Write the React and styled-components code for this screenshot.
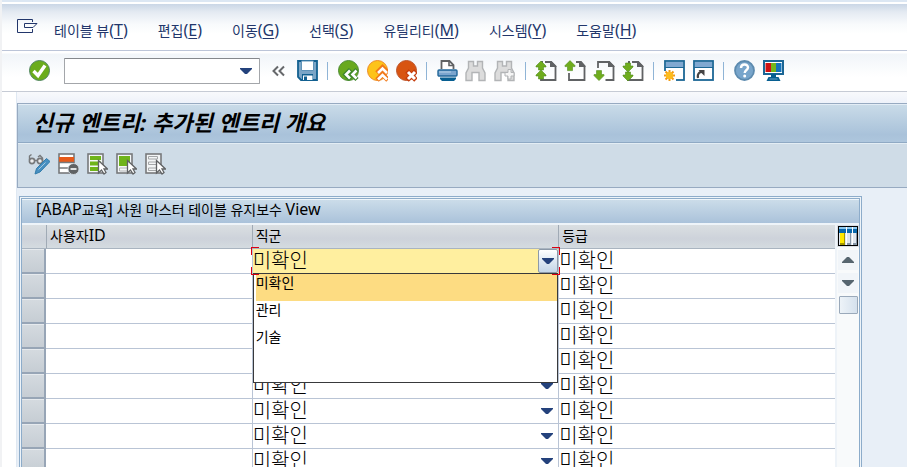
import React from "react";
import styled, { createGlobalStyle, css } from "styled-components";

const GlobalStyle = createGlobalStyle`
  *, *::before, *::after { box-sizing: border-box; }
  body {
    margin: 0;
    overflow: hidden;
    background: #fff;
    color: #000;
    font-family: "Noto Sans", "Noto Sans CJK KR", sans-serif;
    font-size: 14px;
  }
  button, input, select { font: inherit; color: inherit; }
`;

const Page = styled.div`
  display: flex;
  flex-direction: column;
  height: 100vh;
  overflow: hidden;
  border-left: 2px solid #f1f2f4;
`;

const MenuBar = styled.nav`
  flex: none;
  display: flex;
  align-items: center;
  height: 51px;
  padding: 10px 15px 0;
  gap: 15px;
  border-top: 2px solid #dce7f3;
  border-bottom: 1px solid #bcc5d8;
  background: linear-gradient(#fff 0 2px, #cad6e6 2px, #e4eaf2 10px, #f8fafc 22px, #fff 32px);
`;

const MenuList = styled.ul`
  display: flex;
  gap: 30px;
  margin: 0;
  padding: 0;
  list-style: none;
`;

const MenuButton = styled.button`
  padding: 0;
  border: 0;
  background: none;
  color: #22366b;
  line-height: 22px;
  white-space: nowrap;
`;

const Latin = styled.span`
  font-size: 16px;
  line-height: 16px;
  u { text-underline-offset: 2px; }
`;

const PlainButton = styled.button`
  flex: none;
  display: flex;
  align-items: center;
  justify-content: center;
  width: 22px;
  height: 22px;
  padding: 0;
  border: 0;
  background: none;
`;

const SystemButton = styled(PlainButton)`
  margin-bottom: 8px;
`;

const ToolBar = styled.div`
  flex: none;
  display: flex;
  align-items: center;
  gap: 7px;
  height: 41px;
  padding-left: 26px;
  border-bottom: 1px solid #c6cbd5;
  background: linear-gradient(#fff 0 2px, #f1f5f9 3px, #fff 26px);
`;

const Separator = styled.span`
  flex: none;
  width: 1px;
  height: 18px;
  margin: 0 2px;
  background: #8fb4d6;
`;

const CommandBox = styled.div`
  flex: none;
  display: flex;
  align-items: center;
  width: 196px;
  height: 26px;
  margin-left: 7px;
  padding-right: 2px;
  border: 1px solid #a3a6aa;
  border-top-color: #85888c;
  border-radius: 1px;
  background: #fff;
  input {
    flex: 1;
    min-width: 0;
    height: 22px;
    padding: 0 4px;
    border: 0;
    outline: 0;
    background: none;
  }
`;

const Main = styled.main`
  flex: 1;
  min-height: 0;
  display: flex;
  flex-direction: column;
  margin-left: 14px;
  padding-top: 11px;
  border-left: 1px solid #dfe8f2;
  background: linear-gradient(#f8f9fc, #eef2fa 11px, #e8eff7 12px);
`;

const ScreenHead = styled.header`
  flex: none;
  border: 1px solid #97aac1;
  border-right: 0;
  background: #cfdce7;
`;

const ScreenTitle = styled.h1`
  height: 39px;
  margin: 0;
  padding-left: 15px;
  border-top: 1px solid #e3edf6;
  border-bottom: 1px solid #8fa9c4;
  background: linear-gradient(#c9dbe8, #a9c2da 80%, #aec6dd);
  font-size: 22px;
  font-style: italic;
  font-weight: 700;
  line-height: 34px;
  white-space: nowrap;
`;

const AppBar = styled.div`
  display: flex;
  align-items: center;
  gap: 7px;
  height: 44px;
  padding: 0 10px 3px;
  border-top: 1px solid #e3edf4;
`;

const GridFrame = styled.section`
  flex: none;
  margin: 8px 45px 0 2px;
  padding: 1px;
  border: 1px solid #8dacca;
  border-bottom: 0;
  background: #eef4f9;
`;

const GridInner = styled.div`
  border: 1px solid #8dacca;
  border-bottom: 0;
`;

const GridTitle = styled.h2`
  height: 26px;
  margin: 0;
  padding-left: 14px;
  border-top: 1px solid #eef5fa;
  border-bottom: 2px solid #eef4f9;
  background: linear-gradient(#cbdce9, #aac2da);
  font-size: 14px;
  font-weight: 400;
  line-height: 20px;
  white-space: nowrap;
`;

const GridBody = styled.div`
  display: grid;
  grid-template-columns: 1fr 24px;
`;

const Table = styled.table`
  width: 100%;
  border-collapse: separate;
  border-spacing: 0;
  table-layout: fixed;
`;

const HeadCell = styled.th`
  height: 24px;
  padding: 0 0 2px 3px;
  border-bottom: 1px solid #a9b4c0;
  border-left: ${(p) => (p.$first ? "0" : "1px solid #a0aab5")};
  background: linear-gradient(#dadfe2, #cdd2da 60%, #d4dbe0);
  font-weight: 400;
  line-height: 20px;
  text-align: left;
`;

const RowMark = styled.td`
  height: 25px;
  padding: 0;
  border-right: 2px solid #97a5b6;
  border-bottom: 2px solid #97a5b6;
  button {
    display: block;
    width: 100%;
    height: 23px;
    padding: 0;
    border: 0;
    border-top: 1px solid #e6eaee;
    background: linear-gradient(#d4dadf, #c6cdd4);
  }
`;

const Cell = styled.td`
  position: relative;
  height: 25px;
  padding: 0;
  border-bottom: 1px solid #b9c4d5;
  border-left: ${(p) => (p.$ruled ? "1px solid #b9c4d5" : "0")};
  background: #fff;
`;

const IdField = styled.input`
  display: block;
  width: 100%;
  height: 24px;
  padding: 0 4px;
  border: 0;
  outline: 0;
  background: transparent;
`;

const valueText = css`
  font-size: 20px;
  font-weight: 300;
  line-height: 24px;
`;

const PlainValue = styled.span`
  ${valueText}
  display: block;
  height: 24px;
`;

const SelectWrap = styled.div`
  display: grid;
  grid-template-columns: 1fr 22px;
  align-items: center;
  height: 24px;
  select {
    ${valueText}
    grid-area: 1 / 1 / 2 / 3;
    width: 100%;
    height: 24px;
    padding: 0;
    border: 0;
    outline: 0;
    appearance: none;
    background: transparent;
  }
  svg {
    grid-area: 1 / 2;
    justify-self: center;
    pointer-events: none;
  }
`;

const OpenField = styled.div`
  ${valueText}
  display: flex;
  align-items: center;
  height: 24px;
  background: #ffef9f;
  span { flex: 1; }
`;

const OpenButton = styled.button`
  display: flex;
  align-items: center;
  justify-content: center;
  width: 20px;
  height: 24px;
  padding: 0;
  border: 1px solid #8c99a8;
  border-radius: 2px;
  background: linear-gradient(#fff, #dfe9f3 50%, #c5d7e8);
`;

const Corner = styled.i`
  position: absolute;
  z-index: 3;
  width: 8px;
  height: 8px;
  border: 0 solid #dc0012;
  ${(p) => (p.$bottom ? "bottom: -2px; border-bottom-width: 1px;" : "top: -2px; border-top-width: 1px;")}
  ${(p) => (p.$right ? "right: -2px; border-right-width: 1px;" : "left: -2px; border-left-width: 1px;")}
`;

const Popup = styled.ul`
  position: absolute;
  z-index: 2;
  top: 24px;
  left: 0;
  right: 0;
  min-height: 110px;
  margin: 0;
  padding: 0 0 0 2px;
  border: 1px solid #38393b;
  background: #fff;
  list-style: none;
`;

const Option = styled.li`
  height: 27px;
  background: ${(p) => (p["aria-selected"] ? "#fddc82" : "transparent")};
  line-height: 18px;
`;

const ScrollColumn = styled.div`
  display: flex;
  flex-direction: column;
  align-items: center;
  gap: 3px;
  border-left: 2px solid #eef3f8;
  background: #f8fafb;
`;

const ScrollHead = styled.div`
  display: flex;
  align-items: center;
  justify-content: center;
  align-self: stretch;
  height: 22px;
  background: #d9dee4;
`;

const ScrollButton = styled.button`
  display: flex;
  align-items: center;
  justify-content: center;
  width: 20px;
  height: 20px;
  padding: 0;
  border: 0;
  background: #f1f5f9;
`;

const Thumb = styled.button`
  width: 19px;
  height: 18px;
  padding: 0;
  border: 1px solid #9aa9ba;
  border-radius: 1px;
  background: linear-gradient(90deg, #edf3f8, #d5e1ed);
`;

const Triangle = ({ up, color = "#24427c" }) => (
  <svg width="12" height="6" viewBox="0 0 12 6" aria-hidden="true">
    <path d={up ? "M0 6V5L5 0H7L12 5V6Z" : "M0 0V1L5 6H7L12 1V0Z"} fill={color} />
  </svg>
);

const Svg = ({ children }) => (
  <svg width="22" height="22" viewBox="0 0 22 22" fill="none" aria-hidden="true">
    {children}
  </svg>
);

const GREEN = "#6fac1d";
const GREY = "#606264";
const ARROW_UP = "M0 0L5 5V6H2.5V10H-2.5V6H-5V5Z";

const PageShape = () => (
  <>
    <path d="M10 2h6l4.500 4.500V20H6V17M6 2h2" stroke={GREY} strokeWidth="1.800" />
    <path d="M15 1v6H21.500V6L16.500 1z" fill={GREY} />
  </>
);

const GreenArrow = ({ x, y, down, short }) => (
  <path
    d={short ? "M0 0L5 5V6H2.500V9H-2.500V6H-5V5Z" : ARROW_UP}
    transform={`translate(${x} ${y})${down ? " scale(1 -1)" : ""}`}
    fill={GREEN}
    stroke="#4f8b1c"
    strokeWidth="0.6"
  />
);

const Pointer = () => (
  <path d="M12.500 7.500v12.500l3-3 2.500 4 2-1.500-2-3.500h3.500z" fill="#fff" stroke={GREY} strokeWidth="1.3" />
);

const Binoculars = () => (
  <path
    d="M3.500 1.500h5V6h4V1.500h5V8l2.500 5v7.500h-6V12.500h-7v8H1V13l2.500-5z"
    fill="#dcdcdc"
    stroke="#b2b4b6"
    strokeWidth="1.400"
  />
);

const icons = {
  enter: (
    <>
      <circle cx="11.500" cy="10.500" r="10" fill="#6aac1c" stroke="#4f8560" />
      <path d="M5.500 11l4.500 4.500 7-10" stroke="#fff" strokeWidth="3.400" />
    </>
  ),
  collapse: <path d="M11 6.500l-4.500 4.500 4.500 4.500M17 6.500l-4.500 4.500 4.500 4.500" stroke="#66686b" strokeWidth="2" />,
  save: (
    <>
      <path d="M2 1h19v19H5l-3-3z" fill="#7ba5c6" stroke="#126090" strokeWidth="1.800" />
      <path d="M5.500 1h12v9.500h-12z" fill="#fff" stroke="#5f93b8" />
      <path d="M6 14h11v7H6z" fill="#126090" />
      <path d="M7 15.500h9.500V20H7z" fill="#fff" />
      <path d="M8 16.500h3V20H8z" fill="#126090" />
    </>
  ),
  back: (
    <>
      <circle cx="11.500" cy="10.500" r="10" fill="#68a91d" stroke="#4d8c35" />
      <path d="M13.500 9.500L8.500 14.500l5 5M20 9.500L15 14.500l5 5" stroke="#3d852c" strokeWidth="4.500" />
      <path d="M13 10.500l-4 4 4 4M19.500 10.500l-4 4 4 4" stroke="#fff" strokeWidth="2.600" />
    </>
  ),
  exit: (
    <>
      <circle cx="11.500" cy="10.500" r="10" fill="#fdc31a" stroke="#ee8b25" />
      <path d="M11 13l5.500-5.500L22 13M11 20l5.500-5.500L22 20" stroke="#f17919" strokeWidth="5" />
      <path d="M12 13l4.500-4.500L21 13M12 19.500l4.500-4.500 4.500 4.500" stroke="#fff" strokeWidth="2.600" />
    </>
  ),
  cancel: (
    <>
      <circle cx="11.500" cy="10.500" r="10" fill="#d85411" stroke="#bd542a" />
      <path d="M12 11l9 9M21 11l-9 9" stroke="#c53d0d" strokeWidth="5" />
      <path d="M13 12l7 7M20 12l-7 7" stroke="#fff" strokeWidth="3" />
    </>
  ),
  print: (
    <>
      <path d="M5.500 9V1h8l4 4v4" fill="#fff" stroke={GREY} strokeWidth="1.800" />
      <path d="M13 1v4.500h5" stroke={GREY} strokeWidth="1.600" />
      <rect x="2" y="10" width="19" height="6" rx="1" fill="#7ba5ce" stroke="#22679a" strokeWidth="1.400" />
      <path d="M3 12h12" stroke="#b8d3e8" />
      <path d="M4 17.500h16V19l-2 2H6l-2-2z" fill="#075f91" />
    </>
  ),
  find: <Binoculars />,
  findNext: (
    <>
      <Binoculars />
      <path d="M14 9.500h3v3h3v3.500h-3v3h-3v-3h-3v-3.500h3z" fill="#f5f5f5" stroke="#b2b4b6" />
    </>
  ),
  firstPage: (
    <>
      <PageShape />
      <GreenArrow x={6} y={1} short />
      <GreenArrow x={6} y={10} short />
    </>
  ),
  prevPage: (
    <>
      <path d="M12 2h5l3.500 4V20H5V13" stroke={GREY} strokeWidth="1.800" />
      <path d="M15 1v6H21.500V6L16.500 1z" fill={GREY} />
      <GreenArrow x={6} y={0.6} />
    </>
  ),
  nextPage: (
    <>
      <path d="M5 8V2h11l4.500 4.500V20H12.500" stroke={GREY} strokeWidth="1.800" />
      <path d="M15 1v6H21.500V6L16.500 1z" fill={GREY} />
      <GreenArrow x={6} y={20.600} down />
    </>
  ),
  lastPage: (
    <>
      <PageShape />
      <GreenArrow x={6} y={12} down short />
      <GreenArrow x={6} y={21} down short />
    </>
  ),
  session: (
    <>
      <rect x="2" y="1" width="19" height="19" fill="#fff" stroke="#1b6695" strokeWidth="1.800" />
      <path d="M3 2h17v5H3z" fill="#7fa8d1" />
      <path d="M2 7.500h19" stroke="#1b6695" />
      <path d="M0 11h13v11H0z" fill="#fff" />
      <path d="M6.500 10v11M1 15.500h11M2.500 11.500l8 8M10.500 11.500l-8 8" stroke="#f39b14" strokeWidth="2" />
      <circle cx="6.500" cy="15.500" r="3.600" fill="#fdbc1b" />
    </>
  ),
  shortcut: (
    <>
      <rect x="2" y="1" width="19" height="19" fill="#fff" stroke="#1b6695" strokeWidth="1.800" />
      <path d="M3 2h17v5H3z" fill="#7fa8d1" />
      <path d="M2 7.500h19" stroke="#1b6695" />
      <path d="M6 18c-1-5 2-6.500 5-6" stroke="#444" strokeWidth="2.200" />
      <path d="M6.500 10h6v6z" fill="#444" />
    </>
  ),
  help: (
    <>
      <circle cx="11.500" cy="10.500" r="9.500" fill="#78a5cb" stroke="#5d8baf" strokeWidth="1.800" />
      <path d="M8 8c0-4.500 7-4.500 7-0.500 0 2.500-3.300 2.500-3.300 5.500" stroke="#fff" strokeWidth="2.400" />
      <circle cx="11.700" cy="16" r="1.500" fill="#fff" />
    </>
  ),
  layout: (
    <>
      <rect x="2" y="1" width="19" height="13" fill="#fff" stroke="#1b6695" strokeWidth="2" />
      <path d="M3.500 3h5.500v9H3.500z" fill="#cf1111" />
      <path d="M9 3h5v9H9z" fill="#74b61b" />
      <path d="M14 3h5.500v9h-5.500z" fill="#1573ba" />
      <path d="M9 14h5v3h2.500l2 4H4.500l2-4H9z" fill="#075f91" />
      <path d="M7.500 19h8" stroke="#6ea0c3" />
    </>
  ),
  toggle: (
    <>
      <circle cx="4" cy="8" r="2.600" fill="#eee" stroke="#77797b" strokeWidth="1.600" />
      <circle cx="12" cy="8" r="2.600" fill="#eee" stroke="#77797b" strokeWidth="1.600" />
      <path d="M7 7.500h2M1.500 7V3L3.500 1.500M10 4l2-1.500L14.500 5v3" stroke="#77797b" strokeWidth="1.400" />
      <path d="M18.500 5.500l3.500 3-10 10.500-5 2 1.500-5.500z" fill="#478fc1" stroke="#337cab" />
      <path d="M10.500 16.500l7-7" stroke="#a5c9df" />
    </>
  ),
  removeRow: (
    <>
      <rect x="2" y="1" width="15" height="19" fill="#fff" stroke="#77797b" strokeWidth="1.600" />
      <path d="M2 4h15v5H2z" fill="#e65a1a" />
      <path d="M2 9.500h15M2 15h10" stroke="#77797b" strokeWidth="1.400" />
      <circle cx="16.500" cy="16" r="5.500" fill={GREY} stroke="#dce5ec" strokeWidth="0.800" />
      <path d="M13.500 16h6" stroke="#dfe1e2" strokeWidth="2" />
    </>
  ),
  selectAll: (
    <>
      <rect x="2" y="1" width="15" height="19" fill="#f5f7f8" stroke="#77797b" strokeWidth="1.600" />
      <path d="M4 5h11M4 10.500h11M4 16h9" stroke="#6fb41a" strokeWidth="4" />
      <Pointer />
    </>
  ),
  selectBlock: (
    <>
      <rect x="2" y="1" width="15" height="19" fill="#f5f7f8" stroke="#77797b" strokeWidth="1.600" />
      <path d="M4 3h11v10H4z" fill="#6fb41a" />
      <path d="M4.500 15h8v3h-8z" stroke="#b2b4b6" />
      <Pointer />
    </>
  ),
  deselect: (
    <>
      <rect x="2" y="1" width="15" height="19" fill="#f3f5f6" stroke="#77797b" strokeWidth="1.600" />
      <path d="M4.500 3.500h9v2.500h-9zM4.500 9h9v2.500h-9zM4.500 15h8v2.500h-8z" stroke="#a4a6a8" />
      <Pointer />
    </>
  ),
};

const IconButton = ({ icon, label, ...rest }) => (
  <PlainButton type="button" aria-label={label} title={label} {...rest}>
    <Svg>{icons[icon]}</Svg>
  </PlainButton>
);

const menus = [
  ["테이블 뷰", "T"],
  ["편집", "E"],
  ["이동", "G"],
  ["선택", "S"],
  ["유틸리티", "M"],
  ["시스템", "Y"],
  ["도움말", "H"],
];

const toolGroups = [
  [["back", "뒤로"], ["exit", "종료"], ["cancel", "취소"]],
  [["print", "인쇄"], ["find", "찾기"], ["findNext", "다음 찾기"]],
  [["firstPage", "첫 페이지"], ["prevPage", "이전 페이지"], ["nextPage", "다음 페이지"], ["lastPage", "마지막 페이지"]],
  [["session", "새 세션"], ["shortcut", "바로가기"]],
  [["help", "도움말"], ["layout", "레이아웃"]],
];

const appTools = [
  ["toggle", "조회/변경"],
  ["removeRow", "행 삭제"],
  ["selectAll", "전체 선택"],
  ["selectBlock", "블록 선택"],
  ["deselect", "전체 선택 해제"],
];

const options = ["미확인", "관리", "기술"];
const rows = Array.from({ length: 9 }, (_, i) => ({ id: i + 1, job: "미확인", grade: "미확인" }));

const OpenJobField = ({ value }) => (
  <>
    <OpenField>
      <span>{value}</span>
      <OpenButton type="button" aria-label="직군 선택" aria-haspopup="listbox" aria-expanded="true">
        <Triangle />
      </OpenButton>
    </OpenField>
    <Corner />
    <Corner $right />
    <Corner $bottom />
    <Corner $bottom $right />
    <Popup role="listbox" aria-label="직군">
      {options.map((o) => (
        <Option key={o} role="option" aria-selected={o === value}>{o}</Option>
      ))}
    </Popup>
  </>
);

const JobSelect = ({ row }) => (
  <SelectWrap>
    <select aria-label={`직군 ${row.id}`} defaultValue={row.job}>
      {options.map((o) => <option key={o}>{o}</option>)}
    </select>
    <Triangle />
  </SelectWrap>
);

const ColumnsIcon = () => (
  <svg width="20" height="20" viewBox="0 0 20 20" aria-hidden="true">
    <path d="M0 0h20v20H0z" fill="#000" />
    <path d="M1 1h18v18H1z" fill="#dfe6ee" />
    <path d="M1 1h18v2H1z" fill="#8fcaf0" />
    <path d="M1 3h18v4H1z" fill="#0868ad" />
    <path d="M2 7h5v11H2z" fill="#ffe800" />
    <path d="M2 17h5v2H2zM6 7h1v11H6z" fill="#a39700" />
    <path d="M8 1h1v18H8zM14 1h1v18h-1z" fill="#fff" />
    <path d="M12 7h1v12h-1zM18 7h1v12h-1zM9 17h4v2H9zM15 17h4v2h-4z" fill="#8796a6" />
  </svg>
);

export default function App() {
  return (
    <>
      <GlobalStyle />
      <Page>
        <MenuBar>
          <SystemButton type="button" aria-label="시스템 메뉴">
            <svg width="22" height="22" viewBox="0 0 22 22" fill="none" aria-hidden="true">
              <path d="M15.500 6V3.500H0.500v13h15V13" stroke="#22366b" />
              <path d="M7.500 7.500H20L16 11.500H7.500z" stroke="#22366b" />
            </svg>
          </SystemButton>
          <MenuList>
            {menus.map(([name, key]) => (
              <li key={key}>
                <MenuButton type="button">
                  {name}
                  <Latin>(<u>{key}</u>)</Latin>
                </MenuButton>
              </li>
            ))}
          </MenuList>
        </MenuBar>
        <ToolBar>
          <IconButton icon="enter" label="실행" />
          <CommandBox>
            <input aria-label="명령어" type="text" />
            <PlainButton type="button" aria-label="명령어 목록">
              <Triangle />
            </PlainButton>
          </CommandBox>
          <IconButton icon="collapse" label="접기" />
          <IconButton icon="save" label="저장" />
          {toolGroups.map((group) => (
            <React.Fragment key={group[0][0]}>
              <Separator />
              {group.map(([icon, label]) => (
                <IconButton key={icon} icon={icon} label={label} disabled={icon === "find" || icon === "findNext"} />
              ))}
            </React.Fragment>
          ))}
        </ToolBar>
        <Main>
          <ScreenHead>
            <ScreenTitle>신규 엔트리: 추가된 엔트리 개요</ScreenTitle>
            <AppBar>
              {appTools.map(([icon, label]) => (
                <IconButton key={icon} icon={icon} label={label} />
              ))}
            </AppBar>
          </ScreenHead>
          <GridFrame>
            <GridInner>
              <GridTitle>
                <Latin>[ABAP</Latin>교육<Latin>]</Latin> 사원 마스터 테이블 유지보수 <Latin>View</Latin>
              </GridTitle>
              <GridBody>
                <Table>
                  <colgroup>
                    <col width="24" />
                    <col width="25.3%" />
                    <col width="37.7%" />
                    <col />
                  </colgroup>
                  <thead>
                    <tr>
                      <HeadCell $first aria-label="행 선택" />
                      <HeadCell scope="col">사용자<Latin>ID</Latin></HeadCell>
                      <HeadCell scope="col">직군</HeadCell>
                      <HeadCell scope="col">등급</HeadCell>
                    </tr>
                  </thead>
                  <tbody>
                    {rows.map((row, i) => (
                      <tr key={row.id}>
                        <RowMark>
                          <button type="button" aria-label={`${row.id}행 선택`} />
                        </RowMark>
                        <Cell>
                          <IdField type="text" aria-label={`사용자ID ${row.id}`} />
                        </Cell>
                        <Cell $ruled>
                          {i === 0 ? <OpenJobField value={row.job} /> : <JobSelect row={row} />}
                        </Cell>
                        <Cell $ruled>
                          <PlainValue>{row.grade}</PlainValue>
                        </Cell>
                      </tr>
                    ))}
                  </tbody>
                </Table>
                <ScrollColumn>
                  <ScrollHead>
                    <PlainButton type="button" aria-label="테이블 설정">
                      <ColumnsIcon />
                    </PlainButton>
                  </ScrollHead>
                  <ScrollButton type="button" aria-label="위로">
                    <Triangle up color="#56656f" />
                  </ScrollButton>
                  <ScrollButton type="button" aria-label="아래로">
                    <Triangle color="#56656f" />
                  </ScrollButton>
                  <Thumb type="button" aria-label="스크롤" />
                </ScrollColumn>
              </GridBody>
            </GridInner>
          </GridFrame>
        </Main>
      </Page>
    </>
  );
}
